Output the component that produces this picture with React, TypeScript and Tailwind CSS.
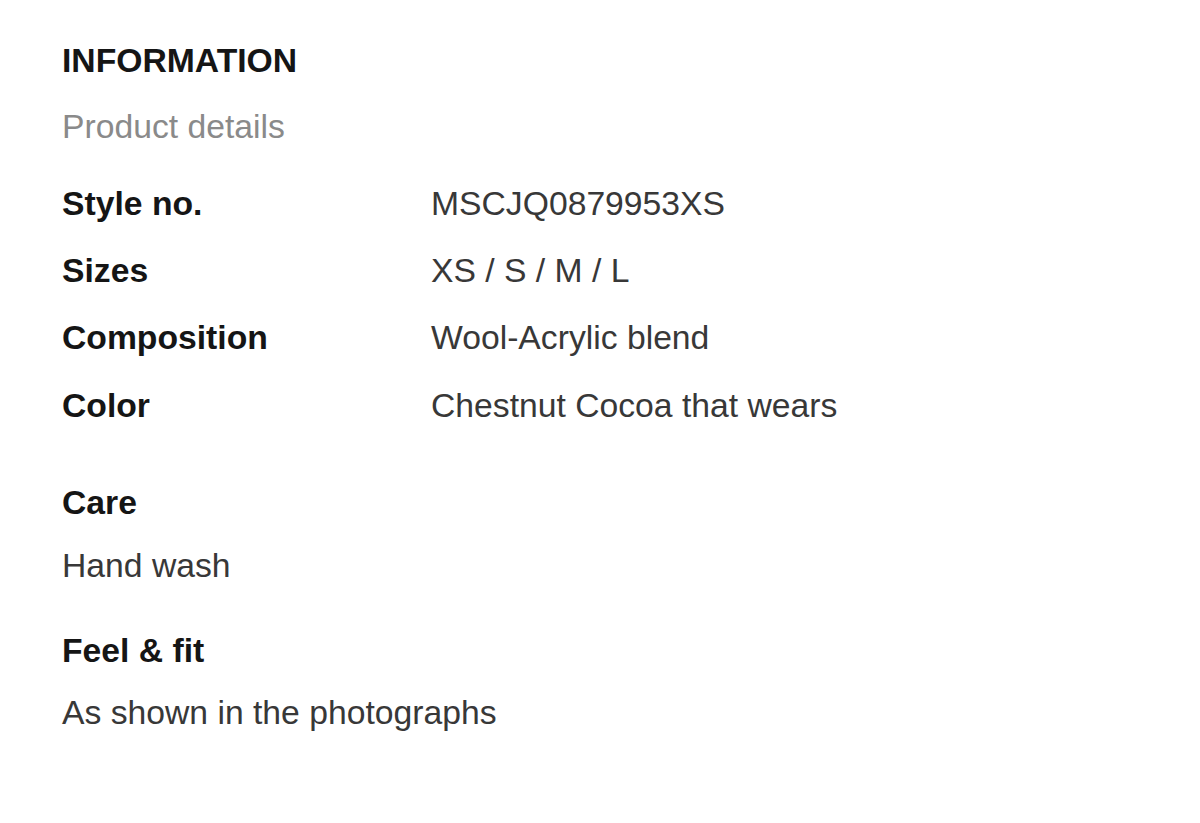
const specs = [
  { label: "Style no.", value: "MSCJQ0879953XS" },
  { label: "Sizes", value: "XS / S / M / L" },
  { label: "Composition", value: "Wool-Acrylic blend" },
  { label: "Color", value: "Chestnut Cocoa that wears" },
];

export default function App() {
  return (
    <div className="min-h-[823px] bg-white pl-[62px] pt-[40px] font-['Liberation_Sans',Arial,sans-serif] text-[33.7px] leading-[40px]">
      <h2 className="font-bold text-[#151515]">INFORMATION</h2>
      <p className="mt-[26px] text-[#8a8a8a]">Product details</p>

      <div className="mt-[37px] flex flex-col gap-[27px]">
        {specs.map((s, i) => (
          <div key={s.label} className={`flex ${i === 3 ? "mt-[1px]" : ""}`}>
            <div className="w-[369px] shrink-0 font-bold text-[#151515]">{s.label}</div>
            <div className="text-[#383838]">{s.value}</div>
          </div>
        ))}
      </div>

      <h3 className="mt-[57px] font-bold text-[#151515]">Care</h3>
      <p className="mt-[23px] text-[#383838]">Hand wash</p>

      <h3 className="mt-[45px] font-bold text-[#151515]">Feel &amp; fit</h3>
      <p className="mt-[22px] text-[#383838]">As shown in the photographs</p>
    </div>
  );
}
